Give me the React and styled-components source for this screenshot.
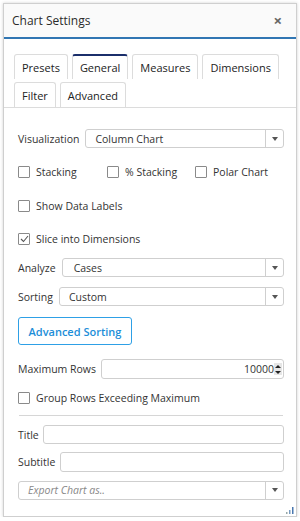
import React, { useState } from 'react';
import styled, { createGlobalStyle } from 'styled-components';

const GlobalStyle = createGlobalStyle`
  html, body {
    margin: 0;
    padding: 0;
    background: #ffffff;
  }
  body {
    font-family: "Open Sans", "Noto Sans", sans-serif;
    color: #333;
  }
`;

// Outer dialog frame
const Panel = styled.div`
  box-sizing: border-box;
  width: 294px;
  height: 514px;
  margin: 3px 0 0 3px;
  border: 1px solid #cfcfcf;
  background: #fff;
  box-shadow: 0 0 3px rgba(0, 0, 0, 0.18);
  display: flex;
  flex-direction: column;
  position: relative;
`;

const Header = styled.div`
  height: 33px;
  background: #fafafa;
  border-bottom: 2px solid #3176b3;
  display: flex;
  align-items: center;
  justify-content: space-between;
  padding: 0 14px 0 8px;
`;

const Title = styled.div`
  font-size: 12px;
  color: #2b2b2b;
`;

const Close = styled.span`
  font-size: 15px;
  font-weight: 700;
  color: #666;
  line-height: 1;
`;

const TabBar = styled.div`
  display: flex;
  flex-wrap: wrap;
  gap: 3px 4px;
  padding: 15px 6px 0 10px;
  border-bottom: 1px solid #dcdcdc;
`;

const Tab = styled.div`
  box-sizing: border-box;
  height: 25px;
  padding: 0 7px;
  display: flex;
  align-items: center;
  font-size: 11px;
  color: #222;
  border: 1px solid #dcdcdc;
  border-bottom: none;
  border-top: ${p => (p.$active ? '2px solid #1b2f6b' : '1px solid #dcdcdc')};
  border-radius: 3px 3px 0 0;
  background: #fff;
  cursor: pointer;
`;

const Body = styled.div`
  display: flex;
  flex-direction: column;
  padding: 21px 12px 0 14px;
`;

const Row = styled.div`
  display: flex;
  align-items: center;
  margin-top: ${p => p.$gap || 0}px;
  min-height: ${p => p.$h || 19}px;
`;

const Label = styled.span`
  font-size: 10.5px;
  color: #333;
  margin-right: ${p => p.$gap || 6}px;
  white-space: nowrap;
`;

const SelectBox = styled.div`
  flex: 1;
  box-sizing: border-box;
  height: 19px;
  border: 1px solid #cfcfcf;
  border-radius: 3px;
  display: flex;
  align-items: stretch;
  background: #fff;
`;

const SelectText = styled.div`
  flex: 1;
  display: flex;
  align-items: center;
  padding-left: ${p => p.$pad || 9}px;
  font-size: 10.5px;
  color: ${p => (p.$placeholder ? '#888' : '#333')};
  font-style: ${p => (p.$placeholder ? 'italic' : 'normal')};
`;

const Arrow = styled.div`
  width: 17px;
  border-left: 1px solid #cfcfcf;
  display: flex;
  align-items: center;
  justify-content: center;
  &::after {
    content: '';
    border-left: 3.5px solid transparent;
    border-right: 3.5px solid transparent;
    border-top: 4px solid #555;
  }
`;

const CheckWrap = styled.label`
  display: flex;
  align-items: center;
  font-size: 10.5px;
  color: #333;
  width: ${p => (p.$w ? p.$w + 'px' : 'auto')};
  cursor: pointer;
`;

const Box = styled.span`
  box-sizing: border-box;
  width: 12px;
  height: 12px;
  border: 1px solid #8a8a8a;
  border-radius: 1px;
  margin-right: 6px;
  display: inline-flex;
  align-items: center;
  justify-content: center;
  background: #fff;
`;

const Button = styled.button`
  box-sizing: border-box;
  width: 114px;
  height: 28px;
  border: 1px solid #2ea0e6;
  border-radius: 3px;
  background: #fff;
  color: #1c8ed8;
  font-family: "Open Sans", "Noto Sans", sans-serif;
  font-size: 11px;
  font-weight: 600;
  padding: 0;
  cursor: pointer;
`;

const NumberBox = styled.div`
  flex: 1;
  box-sizing: border-box;
  height: 20px;
  border: 1px solid #cfcfcf;
  border-radius: 3px;
  display: flex;
  align-items: center;
  justify-content: flex-end;
  padding-right: 1px;
  font-size: 10.5px;
  color: #333;
`;

const Spinner = styled.div`
  width: 8px;
  height: 12px;
  background: #e6e6e6;
  display: flex;
  flex-direction: column;
  align-items: center;
  justify-content: space-around;
  &::before, &::after {
    content: '';
    border-left: 3px solid transparent;
    border-right: 3px solid transparent;
  }
  &::before { border-bottom: 3px solid #222; }
  &::after { border-top: 3px solid #222; }
`;

const TextInput = styled.div`
  flex: 1;
  box-sizing: border-box;
  height: ${p => p.$h || 19}px;
  border: 1px solid #cfcfcf;
  border-radius: 3px;
  background: #fff;
`;

const Divider = styled.div`
  height: 1px;
  background: #d6d6d6;
  margin: 8px 1px 9px 1px;
`;

const Grip = styled.svg`
  position: absolute;
  right: 2px;
  bottom: 2px;
`;

function Check({ checked, label, w, onToggle }) {
  return (
    <CheckWrap $w={w} onClick={onToggle}>
      <Box>
        {checked && (
          <svg width="9" height="8" viewBox="0 0 9 8">
            <path d="M1 4 L3.5 6.5 L8 1" fill="none" stroke="#555" strokeWidth="1.1" />
          </svg>
        )}
      </Box>
      {label}
    </CheckWrap>
  );
}

function Select({ value, placeholder, pad }) {
  return (
    <SelectBox>
      <SelectText $placeholder={placeholder} $pad={pad}>{value}</SelectText>
      <Arrow />
    </SelectBox>
  );
}

export default function App() {
  const tabs = ['Presets', 'General', 'Measures', 'Dimensions', 'Filter', 'Advanced'];
  const [active, setActive] = useState('General');
  const [checks, setChecks] = useState({
    stacking: false,
    pct: false,
    polar: false,
    labels: false,
    slice: true,
    group: false,
  });
  const toggle = k => () => setChecks({ ...checks, [k]: !checks[k] });

  return (
    <>
      <GlobalStyle />
      <Panel>
        <Header>
          <Title>Chart Settings</Title>
          <Close>×</Close>
        </Header>
        <TabBar>
          {tabs.map(t => (
            <Tab key={t} $active={t === active} onClick={() => setActive(t)}>
              {t}
            </Tab>
          ))}
        </TabBar>
        <Body>
          <Row>
            <Label>Visualization</Label>
            <Select value="Column Chart" />
          </Row>
          <Row $gap={15} $h={18}>
            <Check w={89} label="Stacking" checked={checks.stacking} onToggle={toggle('stacking')} />
            <Check w={88} label="% Stacking" checked={checks.pct} onToggle={toggle('pct')} />
            <Check label="Polar Chart" checked={checks.polar} onToggle={toggle('polar')} />
          </Row>
          <Row $gap={16} $h={18}>
            <Check label="Show Data Labels" checked={checks.labels} onToggle={toggle('labels')} />
          </Row>
          <Row $gap={15} $h={18}>
            <Check label="Slice into Dimensions" checked={checks.slice} onToggle={toggle('slice')} />
          </Row>
          <Row $gap={10}>
            <Label>Analyze</Label>
            <Select value="Cases" pad={11} />
          </Row>
          <Row $gap={10}>
            <Label>Sorting</Label>
            <Select value="Custom" />
          </Row>
          <Row $gap={11} $h={28}>
            <Button>Advanced Sorting</Button>
          </Row>
          <Row $gap={14} $h={20}>
            <Label $gap={5}>Maximum Rows</Label>
            <NumberBox>
              10000
              <Spinner />
            </NumberBox>
          </Row>
          <Row $gap={10} $h={18}>
            <Check label="Group Rows Exceeding Maximum" checked={checks.group} onToggle={toggle('group')} />
          </Row>
          <Divider />
          <Row>
            <Label $gap={4}>Title</Label>
            <TextInput />
          </Row>
          <Row $gap={8} $h={20}>
            <Label $gap={5}>Subtitle</Label>
            <TextInput $h={20} />
          </Row>
          <Row $gap={8} $h={20}>
            <Select value="Export Chart as.." placeholder pad={9} />
          </Row>
        </Body>
        <Grip width="8" height="7" viewBox="0 0 8 7">
          <rect x="0" y="5" width="1.5" height="2" fill="#9aa" />
          <rect x="3" y="3" width="1.5" height="4" fill="#7a9cc0" />
          <rect x="6" y="0" width="1.5" height="7" fill="#4a78b0" />
        </Grip>
      </Panel>
    </>
  );
}
